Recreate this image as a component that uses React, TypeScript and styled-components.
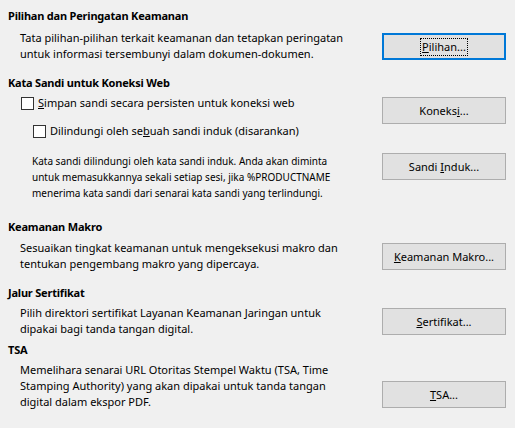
import styled, { createGlobalStyle } from 'styled-components';

const GlobalStyle = createGlobalStyle`
  html, body {
    margin: 0;
    padding: 0;
    background: #f0f0f0;
  }
  body {
    font-family: "Noto Sans", "Open Sans", sans-serif;
    font-size: 11px;
    color: #000;
  }
`;

const App = (): JSX.Element => {
    return (
        <>
            <GlobalStyle />
            <Page>
                <Heading $mt={0}>Pilihan dan Peringatan Keamanan</Heading>
                <Body $mt={6}>
                    <Desc>
                        Tata pilihan-pilihan terkait keamanan dan tetapkan peringatan<br />
                        untuk informasi tersembunyi dalam dokumen-dokumen.
                    </Desc>
                    <Button $focused>
                        <FocusRing><u>P</u>ilihan...</FocusRing>
                    </Button>
                </Body>

                <Heading $mt={13}>Kata Sandi untuk Koneksi Web</Heading>
                <WebGrid>
                    <CheckList>
                        <CheckRow $indent={21}>
                            <Box />
                            <span><u>S</u>impan sandi secara persisten untuk koneksi web</span>
                        </CheckRow>
                        <CheckRow $indent={33}>
                            <Box />
                            <span>Dilindungi oleh se<u>b</u>uah sandi induk (disarankan)</span>
                        </CheckRow>
                    </CheckList>
                    <Button $top={2}><span>Koneks<u>i</u>...</span></Button>
                    <Note>
                        Kata sandi dilindungi oleh kata sandi induk. Anda akan diminta<br />
                        untuk memasukkannya sekali setiap sesi, jika %PRODUCTNAME<br />
                        menerima kata sandi dari senarai kata sandi yang terlindungi.
                    </Note>
                    <Button $top={0}><span>Sandi <u>I</u>nduk...</span></Button>
                </WebGrid>

                <Heading $mt={18}>Keamanan Makro</Heading>
                <Body $mt={5}>
                    <Desc>
                        Sesuaikan tingkat keamanan untuk mengeksekusi makro dan<br />
                        tentukan pengembang makro yang dipercaya.
                    </Desc>
                    <Button><span><u>K</u>eamanan Makro...</span></Button>
                </Body>

                <Heading $mt={13}>Jalur Sertifikat</Heading>
                <Body $mt={4}>
                    <Desc>
                        Pilih direktori sertifikat Layanan Keamanan Jaringan untuk<br />
                        dipakai bagi tanda tangan digital.
                    </Desc>
                    <Button><span><u>S</u>ertifikat...</span></Button>
                </Body>

                <Heading $mt={5}>TSA</Heading>
                <Body $mt={4}>
                    <Desc>
                        Memelihara senarai URL Otoritas Stempel Waktu (TSA, Time<br />
                        Stamping Authority) yang akan dipakai untuk tanda tangan<br />
                        digital dalam ekspor PDF.
                    </Desc>
                    <Button><span><u>T</u>SA...</span></Button>
                </Body>
            </Page>
        </>
    )
}

export default App;


const Page = styled.div`
  width: 515px;
  height: 428px;
  box-sizing: border-box;
  padding: 8px 9px 0 8px;
  background: #f0f0f0;
  overflow: hidden;
`

const Heading = styled.div<{ $mt: number }>`
  margin-top: ${p => p.$mt}px;
  font-weight: bold;
  letter-spacing: -0.2px;
  line-height: 16px;
  white-space: nowrap;
`

const Body = styled.div<{ $mt: number }>`
  margin-top: ${p => p.$mt}px;
  display: grid;
  grid-template-columns: 1fr 124px;
  align-items: end;
`

const Desc = styled.div`
  padding-left: 12px;
  line-height: 16px;
  white-space: nowrap;
`

const WebGrid = styled.div`
  margin-top: 4px;
  display: grid;
  grid-template-columns: 1fr 124px;
  row-gap: 14px;
  align-items: start;
`

const CheckList = styled.div`
  display: flex;
  flex-direction: column;
  gap: 12px;
`

const CheckRow = styled.label<{ $indent: number }>`
  display: flex;
  align-items: center;
  gap: 4px;
  margin-left: ${p => p.$indent - 8}px;
  line-height: 16px;
  white-space: nowrap;
`

const Box = styled.span`
  width: 13px;
  height: 13px;
  box-sizing: border-box;
  border: 1px solid #333;
  background: #fff;
  flex-shrink: 0;
`

const Note = styled.div`
  padding-left: 24px;
  font-size: 10px;
  line-height: 16px;
  white-space: nowrap;
`

const Button = styled.div<{ $focused?: boolean; $top?: number }>`
  height: 27px;
  box-sizing: border-box;
  margin-top: ${p => p.$top ?? 0}px;
  margin-bottom: ${p => p.$top === undefined ? 2 : 0}px;
  display: flex;
  align-items: center;
  justify-content: center;
  background: #e1e1e1;
  border: ${p => p.$focused ? '2px solid #0078d7' : '1px solid #adadad'};
  white-space: nowrap;
  cursor: default;
`

const FocusRing = styled.span`
  border: 1px dotted #000;
  padding: 0 1px;
  line-height: 16px;
`
